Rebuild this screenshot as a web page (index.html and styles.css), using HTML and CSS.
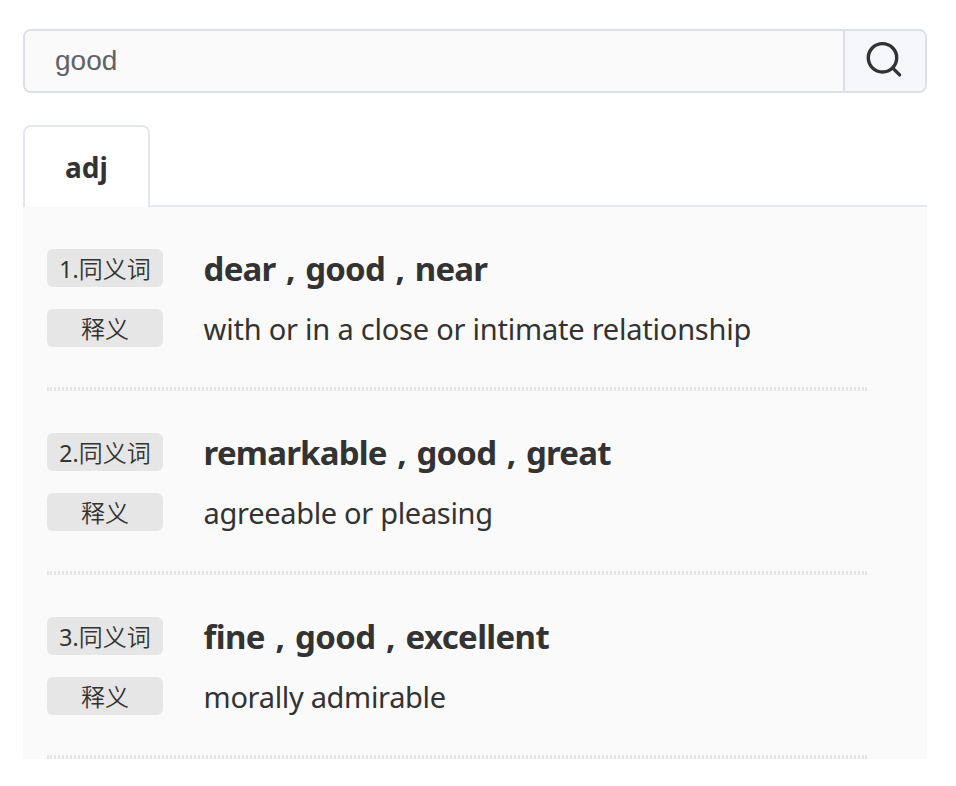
FILE: index.html
```html
<!DOCTYPE html>
<html lang="zh">
<head>
    <meta charset="UTF-8">
    <meta name="viewport" content="width=device-width, initial-scale=1.0">
    <title>同义词</title>
    <link rel="stylesheet" href="styles.css">
</head>
<body>

    <div class="container">
        <div class="search">
            <input type="text" class="search-input" value="good">
            <button type="button" class="search-btn" aria-label="search">
                <svg width="38" height="38" viewBox="0 0 38 38" fill="none" stroke="#333" stroke-width="3.4" stroke-linecap="round">
                    <circle cx="16.5" cy="16.8" r="14.2"/>
                    <path d="M27.3 27.6L33.6 33.9"/>
                </svg>
            </button>
        </div>

        <div class="tabs">
            <div class="tab active">adj</div>
            <div class="tab-line"></div>
        </div>

        <div class="panel">
            <div class="item">
                <div class="row">
                    <span class="tag"><span class="num">1.</span>同义词</span>
                    <span class="words">dear , good , near</span>
                </div>
                <div class="row">
                    <span class="tag">释义</span>
                    <span class="meaning wide">with or in a close or intimate relationship</span>
                </div>
                <hr>
            </div>
            <div class="item">
                <div class="row">
                    <span class="tag"><span class="num">2.</span>同义词</span>
                    <span class="words">remarkable , good , great</span>
                </div>
                <div class="row">
                    <span class="tag">释义</span>
                    <span class="meaning">agreeable or pleasing</span>
                </div>
                <hr>
            </div>
            <div class="item">
                <div class="row">
                    <span class="tag"><span class="num">3.</span>同义词</span>
                    <span class="words wide">fine , good , excellent</span>
                </div>
                <div class="row">
                    <span class="tag">释义</span>
                    <span class="meaning">morally admirable</span>
                </div>
                <hr>
            </div>
        </div>
    </div>

</body>
</html>
```

FILE: styles.css
```css
* {
    margin: 0;
    padding: 0;
    box-sizing: border-box;
}

body {
    background: #fff;
    color: #333;
    font-family: "Noto Sans", "Noto Sans CJK SC", sans-serif;
}

.container {
    width: 904px;
    margin: 29px 0 0 23px;
}

.search {
    display: flex;
    height: 64px;
    border: 2px solid #dcdfe6;
    border-radius: 8px;
    overflow: hidden;
}

.search-input {
    flex: 1;
    padding: 0 30px;
    border: none;
    outline: none;
    background: #fafafa;
    color: #606266;
    font-family: "Liberation Sans", Arial, sans-serif;
    font-size: 28px;
}

.search-btn {
    width: 82px;
    padding-bottom: 3px;
    border: none;
    border-left: 2px solid #dcdfe6;
    background: #f5f7fa;
    display: flex;
    align-items: center;
    justify-content: center;
}

.tabs {
    display: flex;
    height: 82px;
    margin-top: 32px;
}

.tab {
    width: 127px;
    border: 2px solid #e4e7ed;
    border-bottom: none;
    border-radius: 8px 8px 0 0;
    font-size: 28px;
    font-weight: bold;
    line-height: 80px;
    text-align: center;
}

.tab-line {
    flex: 1;
    border-bottom: 2px solid #e4e7ed;
}

.panel {
    background: #fafafa;
    height: 552px;
    padding: 0 60px 0 24px;
}

.item {
    height: 184px;
    padding-top: 42px;
}

.row {
    display: flex;
    align-items: center;
    height: 38px;
    margin-bottom: 22px;
}

.tag {
    width: 116px;
    height: 38px;
    margin-right: 40.6px;
    border-radius: 6px;
    background: #e6e6e6;
    font-size: 24px;
    font-weight: 350;
    line-height: 40px;
    text-align: center;
    white-space: nowrap;
}

.num {
    font-size: 23px;
    font-weight: 400;
}

.words {
    font-size: 33px;
    font-weight: bold;
    letter-spacing: -0.8px;
    word-spacing: 2.8px;
    white-space: nowrap;
}

.words.wide {
    letter-spacing: -0.65px;
}

.meaning {
    font-size: 29px;
    letter-spacing: -0.32px;
    white-space: nowrap;
}

.meaning.wide {
    letter-spacing: -0.22px;
}

hr {
    height: 4px;
    margin-top: 40px;
    border: 0 solid #e4e4e4;
    border-width: 0 2px;
    background: repeating-linear-gradient(to right, #fafafa 0 1px, #e4e4e4 1px 3px, #fafafa 3px 4px);
}
```
